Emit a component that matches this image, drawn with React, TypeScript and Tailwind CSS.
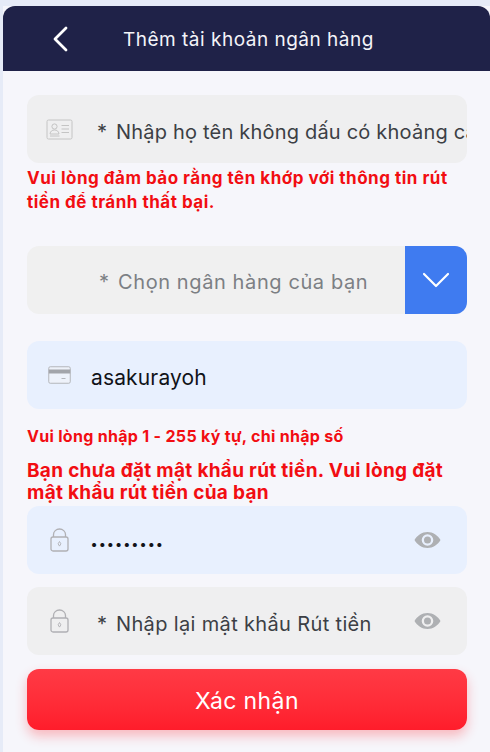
import React from "react";

const font = { fontFamily: '"Inter", "Noto Sans", sans-serif' };

function IdIcon() {
  return (
    <svg width="27" height="21" viewBox="0 0 27 21" fill="none" stroke="#c4c4c4" strokeWidth="1">
      <rect x="1" y="1" width="25" height="19" rx="1.5" />
      <circle cx="8.5" cy="7.5" r="2.6" />
      <path d="M4 15c.4-3 2.2-4 4.5-4s4.100 1 4.500 4zM4 17h9.500" />
      <path d="M15.500 6.500h7.500M15.500 10h7.500M15.500 13.500h7.500" strokeWidth="1.200" />
    </svg>
  );
}

function CardIcon() {
  return (
    <svg width="23" height="18" viewBox="0 0 23 18" fill="none">
      <rect x="0.750" y="0.750" width="21.500" height="16.500" rx="1.500" stroke="#b4b6bb" strokeWidth="1" fill="#eef2fa" />
      <rect x="0.750" y="3.500" width="21.500" height="4" fill="#a3a5aa" />
      <path d="M13.500 12.500h4" stroke="#b4b6bb" strokeWidth="1" />
    </svg>
  );
}

function LockIcon() {
  return (
    <svg width="19" height="24" viewBox="0 0 19 24" fill="none" stroke="#b0b0b4" strokeWidth="1.300">
      <rect x="1" y="9" width="17" height="14" rx="2" />
      <path d="M3.500 9V6.500a6 5.500 0 0 1 12 0V9" />
      <path d="M9.500 13.500l1.400 2.300-1.400 2.300-1.400-2.300z" strokeWidth="0.900" />
    </svg>
  );
}

function EyeIcon() {
  return (
    <svg width="27" height="18" viewBox="0 0 27 18">
      <path
        fillRule="evenodd"
        fill="#aeb0b3"
        d="M13.500 1C19 1 23.800 4.300 26.500 9 23.800 13.700 19 17 13.500 17S3.200 13.700.5 9C3.200 4.300 8 1 13.500 1zM13.500 3.200a5.800 5.800 0 1 0 0 11.600 5.800 5.800 0 0 0 0-11.600z"
      />
      <path fill="#aeb0b3" fillRule="evenodd" d="M13.500 5.500a3.500 3.500 0 1 0 0 7 3.500 3.500 0 0 0 0-7z" />
    </svg>
  );
}

function Row({ bg, icon, children, right, mt }: { bg: string; icon: React.ReactNode; children: React.ReactNode; right?: React.ReactNode; mt: string }) {
  return (
    <div className={`${bg} ${mt} ml-6 flex h-[68px] w-[440px] items-center overflow-hidden rounded-xl`}>
      <div className="flex w-[64px] shrink-0 justify-center">{icon}</div>
      <div className="min-w-0 flex-1 overflow-hidden pt-[5px] whitespace-nowrap">{children}</div>
      {right && <div className="flex w-[80px] shrink-0 justify-center">{right}</div>}
    </div>
  );
}

function Star() {
  return <span className="ml-[6px] inline-block w-[19px]">*</span>;
}

export default function App() {
  return (
    <div className="h-[752px] w-[490px] overflow-hidden bg-[#e6ebf7] pt-[6px] pl-[3px]" style={font}>
      <div className="h-[746px] bg-[#f6f6fb]">
        <header className="flex h-[65px] items-center rounded-t-xl bg-[#1f2248]">
          <svg className="ml-[49px]" width="16" height="26" viewBox="0 0 16 26" fill="none" stroke="#ffffff" strokeWidth="2.800" strokeLinecap="round" strokeLinejoin="round">
            <path d="M14 2L3 13l11 11" />
          </svg>
          <h1 className="ml-[55px] pt-1 text-[19px] font-normal tracking-[0.5px] text-[#f3f4f8]">Thêm tài khoản ngân hàng</h1>
        </header>

        <Row mt="mt-6" bg="bg-[#efeff0]" icon={<IdIcon />}>
          <span className="text-[20px] tracking-[0.2px] text-[#3c3f45]">
            <Star />Nhập họ tên không dấu có khoảng cách
          </span>
        </Row>
        <p className="mt-[3px] ml-6 w-[440px] text-[17px] leading-6 font-bold tracking-[0.5px] text-[#f20d12]">Vui lòng đảm bảo rằng tên khớp với thông tin rút tiền để tránh thất bại.</p>

        <div className="mt-8 ml-6 flex h-[68px] w-[440px] overflow-hidden rounded-xl bg-[#f0f0f0]">
          <div className="flex flex-1 items-center pt-1 pl-[72px] text-[20px] tracking-[0.6px] whitespace-nowrap text-[#7c7f84]">
            <span className="inline-block w-[19px]">*</span>Chọn ngân hàng của bạn
          </div>
          <div className="flex w-[62px] shrink-0 items-center justify-center bg-[#3f7bf0]">
            <svg width="28" height="18" viewBox="0 0 28 18" fill="none" stroke="#ffffff" strokeWidth="2.200" strokeLinecap="round" strokeLinejoin="round">
              <path d="M2 3l12 12L26 3" />
            </svg>
          </div>
        </div>

        <Row mt="mt-[27px]" bg="bg-[#e8f0fe]" icon={<CardIcon />}>
          <span className="text-[21px] tracking-[0.15px] text-[#111318]">asakurayoh</span>
        </Row>
        <p className="mt-[17px] ml-6 w-[440px] text-[16px] leading-5 font-bold tracking-[0.3px] text-[#f20d12]">Vui lòng nhập 1 - 255 ký tự, chỉ nhập số</p>
        <p className="mt-[14px] ml-6 w-[440px] text-[19px] leading-[22px] font-bold tracking-[0.3px] text-[#f20d12]">Bạn chưa đặt mật khẩu rút tiền. Vui lòng đặt mật khẩu rút tiền của bạn</p>

        <Row mt="mt-[2px]" bg="bg-[#e8f0fe]" icon={<LockIcon />} right={<EyeIcon />}>
          <span className="text-[13px] leading-none font-bold tracking-[2px] text-[#111318]">•••••••••</span>
        </Row>
        <Row mt="mt-[13px]" bg="bg-[#efeff0]" icon={<LockIcon />} right={<EyeIcon />}>
          <span className="text-[20px] tracking-[0.35px] text-[#3c3f45]">
            <Star />Nhập lại mật khẩu Rút tiền
          </span>
        </Row>

        <button className="mt-[14px] ml-6 flex h-[61px] w-[440px] items-center justify-center rounded-xl bg-gradient-to-b from-[#ff3a45] to-[#ff1c2b] pt-1 text-[23px] tracking-[0.4px] text-white shadow-[0_6px_12px_rgba(255,40,50,0.3)]">
          Xác nhận
        </button>
      </div>
    </div>
  );
}
